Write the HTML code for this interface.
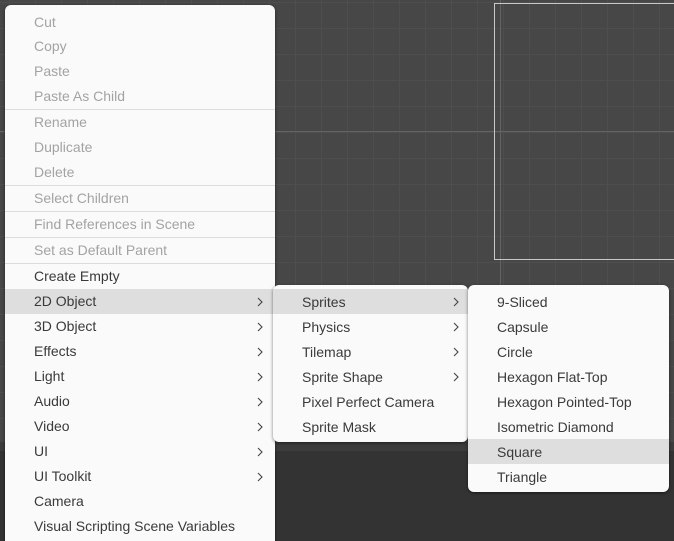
<!DOCTYPE html>
<html><head><style>
html,body{margin:0;width:674px;height:541px;overflow:hidden;}
body{position:relative;background:#474747;font-family:"Liberation Sans",sans-serif;font-size:14px;}
.grid{position:absolute;left:0;top:0;width:674px;height:442px;background-color:#474747;
background-image:linear-gradient(to right,#4e4e4e 1px,transparent 1px),linear-gradient(to bottom,#4e4e4e 1px,transparent 1px);
background-size:26px 26px;background-position:9px 2px;}
.hl{position:absolute;left:0;top:131px;width:674px;height:1px;background:#646464}
.vl{position:absolute;left:500px;top:0;width:1px;height:442px;background:#646464}
.rect{position:absolute;left:494px;top:3px;width:200px;height:255px;border:1px solid #c8c8c8}
.band{position:absolute;left:0;top:442px;width:674px;height:9px;background:#3c3c3c}
.bot{position:absolute;left:0;top:451px;width:674px;height:90px;background:#333}
.menu{position:absolute;background:#fafafa;border-radius:6px;box-shadow:0 1px 3px rgba(0,0,0,.5);overflow:hidden}
.it{height:25px;line-height:25px;color:#3a3a3a;position:relative;white-space:nowrap;padding-left:29px}
.d{color:#a3a3a3}
.sep{height:1px;background:#dcdcdc}
.sel{background:#dedede}
.ar{position:absolute;top:0;}
.ar svg{display:block;margin-top:8px}
</style></head><body>
<div class="grid"></div><div class="hl"></div><div class="vl"></div><div class="rect"></div>
<div class="band"></div><div class="bot"></div>

<div class="menu" style="left:5px;top:5px;width:270px;height:545px;padding-top:4px;box-sizing:border-box">
<div class="it d" style="line-height:27px">Cut</div>
<div class="it d">Copy</div>
<div class="it d">Paste</div>
<div class="it d">Paste As Child</div>
<div class="sep"></div>
<div class="it d">Rename</div>
<div class="it d">Duplicate</div>
<div class="it d">Delete</div>
<div class="sep"></div>
<div class="it d">Select Children</div>
<div class="sep"></div>
<div class="it d">Find References in Scene</div>
<div class="sep"></div>
<div class="it d">Set as Default Parent</div>
<div class="sep"></div>
<div class="it">Create Empty</div>
<div class="it sel">2D Object<span class="ar" style="left:252px"><svg width="6" height="10"><path d="M1 1L5 5L1 9" stroke="#444" fill="none" stroke-width="1.1"/></svg></span></div>
<div class="it">3D Object<span class="ar" style="left:252px"><svg width="6" height="10"><path d="M1 1L5 5L1 9" stroke="#444" fill="none" stroke-width="1.1"/></svg></span></div>
<div class="it">Effects<span class="ar" style="left:252px"><svg width="6" height="10"><path d="M1 1L5 5L1 9" stroke="#444" fill="none" stroke-width="1.1"/></svg></span></div>
<div class="it">Light<span class="ar" style="left:252px"><svg width="6" height="10"><path d="M1 1L5 5L1 9" stroke="#444" fill="none" stroke-width="1.1"/></svg></span></div>
<div class="it">Audio<span class="ar" style="left:252px"><svg width="6" height="10"><path d="M1 1L5 5L1 9" stroke="#444" fill="none" stroke-width="1.1"/></svg></span></div>
<div class="it">Video<span class="ar" style="left:252px"><svg width="6" height="10"><path d="M1 1L5 5L1 9" stroke="#444" fill="none" stroke-width="1.1"/></svg></span></div>
<div class="it">UI<span class="ar" style="left:252px"><svg width="6" height="10"><path d="M1 1L5 5L1 9" stroke="#444" fill="none" stroke-width="1.1"/></svg></span></div>
<div class="it">UI Toolkit<span class="ar" style="left:252px"><svg width="6" height="10"><path d="M1 1L5 5L1 9" stroke="#444" fill="none" stroke-width="1.1"/></svg></span></div>
<div class="it">Camera</div>
<div class="it">Visual Scripting Scene Variables</div>
</div>

<div class="menu" style="left:273px;top:285px;width:195px;height:157px;padding-top:4px;box-sizing:border-box">
<div class="it sel" style="line-height:26px">Sprites<span class="ar" style="left:180px"><svg width="6" height="10"><path d="M1 1L5 5L1 9" stroke="#444" fill="none" stroke-width="1.1"/></svg></span></div>
<div class="it" style="line-height:26px">Physics<span class="ar" style="left:180px"><svg width="6" height="10"><path d="M1 1L5 5L1 9" stroke="#444" fill="none" stroke-width="1.1"/></svg></span></div>
<div class="it" style="line-height:26px">Tilemap<span class="ar" style="left:180px"><svg width="6" height="10"><path d="M1 1L5 5L1 9" stroke="#444" fill="none" stroke-width="1.1"/></svg></span></div>
<div class="it" style="line-height:26px">Sprite Shape<span class="ar" style="left:180px"><svg width="6" height="10"><path d="M1 1L5 5L1 9" stroke="#444" fill="none" stroke-width="1.1"/></svg></span></div>
<div class="it" style="line-height:26px">Pixel Perfect Camera</div>
<div class="it" style="line-height:26px">Sprite Mask</div>
</div>

<div class="menu" style="left:468px;top:285px;width:201px;height:207px;padding-top:4px;box-sizing:border-box">
<div class="it" style="line-height:26px">9-Sliced</div>
<div class="it" style="line-height:26px">Capsule</div>
<div class="it" style="line-height:26px">Circle</div>
<div class="it" style="line-height:26px">Hexagon Flat-Top</div>
<div class="it" style="line-height:26px">Hexagon Pointed-Top</div>
<div class="it" style="line-height:26px">Isometric Diamond</div>
<div class="it sel" style="line-height:26px">Square</div>
<div class="it" style="line-height:26px">Triangle</div>
</div>
</body></html>
